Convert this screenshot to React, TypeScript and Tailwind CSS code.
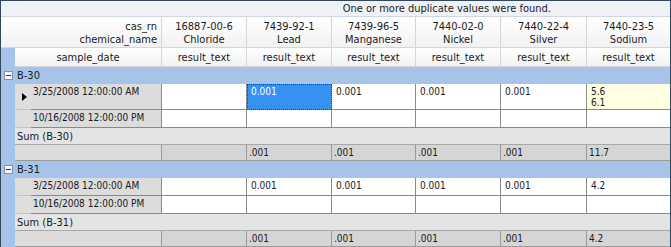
import React from 'react';

const columns = [
  { cas: '16887-00-6', name: 'Chloride', w: 'w-[85px]' },
  { cas: '7439-92-1', name: 'Lead', w: 'w-[85px]' },
  { cas: '7439-96-5', name: 'Manganese', w: 'w-[84px]' },
  { cas: '7440-02-0', name: 'Nickel', w: 'w-[85px]' },
  { cas: '7440-22-4', name: 'Silver', w: 'w-[86px]' },
  { cas: '7440-23-5', name: 'Sodium', w: 'w-[84px]' },
];

type Cell = { lines: string[]; selected?: boolean; dup?: boolean };

type Group = {
  name: string;
  rows: { date: string; current?: boolean; tall?: boolean; cells: Cell[] }[];
  sums: string[];
};

const groups: Group[] = [
  {
    name: 'B-30',
    rows: [
      {
        date: '3/25/2008 12:00:00 AM',
        current: true,
        tall: true,
        cells: [
          { lines: [] },
          { lines: ['0.001'], selected: true },
          { lines: ['0.001'] },
          { lines: ['0.001'] },
          { lines: ['0.001'] },
          { lines: ['5.6', '6.1'], dup: true },
        ],
      },
      { date: '10/16/2008 12:00:00 PM', cells: columns.map(() => ({ lines: [] })) },
    ],
    sums: ['', '.001', '.001', '.001', '.001', '11.7'],
  },
  {
    name: 'B-31',
    rows: [
      {
        date: '3/25/2008 12:00:00 AM',
        cells: [
          { lines: [] },
          { lines: ['0.001'] },
          { lines: ['0.001'] },
          { lines: ['0.001'] },
          { lines: ['0.001'] },
          { lines: ['4.2'] },
        ],
      },
      { date: '10/16/2008 12:00:00 PM', cells: columns.map(() => ({ lines: [] })) },
    ],
    sums: ['', '.001', '.001', '.001', '.001', '4.2'],
  },
];

const GroupBlock: React.FC<{ group: Group }> = ({ group }) => (
  <div>
    {/* group caption */}
    <div className="flex items-center h-[17px] bg-[#a6c4e9] pl-[3px]">
      <div className="w-[9px] h-[9px] border border-[#7f93ad] bg-[#f4f6f9] flex items-center justify-center">
        <div className="w-[5px] h-px bg-[#33445a]" />
      </div>
      <span className="ml-[4px] text-[#1a1a1a]">{group.name}</span>
    </div>
    <div className="flex">
      <div className="w-[14px] shrink-0 bg-[#a6c4e9]" />
      <div className="flex-1 min-w-0 text-[10px]">
        {group.rows.map((row, i) => (
          <div key={i} className={`flex ${row.tall ? 'h-[26px]' : 'h-[18px]'}`}>
            <div className="w-[16px] shrink-0 bg-[#dedede] border-b border-[#c4c4c4] flex items-center justify-center">
              {row.current && (
                <div className="w-0 h-0 border-y-[4px] border-y-transparent border-l-[5px] border-l-black ml-[3px]" />
              )}
            </div>
            <div className="w-[131px] shrink-0 bg-[#dcdcdc] border-r border-b border-[#8a8a8a] pl-[2px] pt-[2px] leading-[12px]">
              {row.date}
            </div>
            {row.cells.map((c, j) => (
              <div
                key={j}
                className={`${columns[j].w} shrink-0 border-r border-b border-[#8a8a8a] pl-[4px] pt-[2px] leading-[11px] ${
                  c.selected
                    ? 'bg-[#3592f0] text-white outline-1 outline-dotted outline-[#1f3f7a] -outline-offset-1'
                    : c.dup
                    ? 'bg-[#ffffe1]'
                    : 'bg-white'
                }`}
              >
                {c.lines.map((l) => (
                  <div key={l}>{l}</div>
                ))}
              </div>
            ))}
          </div>
        ))}
        {/* summary caption */}
        <div className="h-[17px] bg-[#e4e4e4] border-b border-[#a8a8a8] pl-[2px] flex items-center text-[11px]">
          Sum ({group.name})
        </div>
        <div className="flex h-[16px]">
          <div className="w-[147px] shrink-0 bg-[#dcdcdc] border-r border-b border-[#9a9a9a]" />
          {group.sums.map((s, j) => (
            <div
              key={j}
              className={`${columns[j].w} shrink-0 bg-[#d5d5d5] border-r border-b border-[#9a9a9a] pl-[2px] flex items-center`}
            >
              {s}
            </div>
          ))}
        </div>
      </div>
    </div>
  </div>
);

export default function App() {
  return (
    <div
      className="w-[671px] h-[247px] overflow-hidden bg-[#a6c4e9] border-t border-x border-[#34465b] text-[11px] text-[#1a1a1a] leading-[13px]"
      style={{ fontFamily: '"DejaVu Sans Condensed", "Liberation Sans", sans-serif' }}
    >
      {/* message bar */}
      <div className="h-[16px] bg-[#eef1f5] border-b border-[#cfd7e0] flex items-center justify-end pr-[119px] text-[#222]">
        One or more duplicate values were found.
      </div>
      {/* header: cas_rn / chemical_name */}
      <div className="flex h-[31px] bg-gradient-to-b from-white to-[#f2f2f2] border-b border-[#d6d6d6]">
        <div className="w-[161px] shrink-0 border-r border-[#d6d6d6] text-right pr-[4px] pt-[3px] leading-[13px]">
          <div>cas_rn</div>
          <div>chemical_name</div>
        </div>
        {columns.map((c) => (
          <div
            key={c.cas}
            className={`${c.w} shrink-0 border-r border-[#d6d6d6] text-center pt-[3px] leading-[13px]`}
          >
            <div>{c.cas}</div>
            <div>{c.name}</div>
          </div>
        ))}
      </div>
      {/* header: sample_date / result_text */}
      <div className="flex h-[19px]">
        <div className="w-[14px] shrink-0 bg-[#a6c4e9]" />
        <div className="flex flex-1 bg-gradient-to-b from-white to-[#f2f2f2] border-b border-[#d6d6d6]">
          <div className="w-[147px] shrink-0 border-r border-[#d6d6d6] flex items-center justify-center">
            sample_date
          </div>
          {columns.map((c) => (
            <div
              key={c.cas}
              className={`${c.w} shrink-0 border-r border-[#d6d6d6] flex items-center justify-center`}
            >
              result_text
            </div>
          ))}
        </div>
      </div>
      {groups.map((g) => (
        <GroupBlock key={g.name} group={g} />
      ))}
    </div>
  );
}
